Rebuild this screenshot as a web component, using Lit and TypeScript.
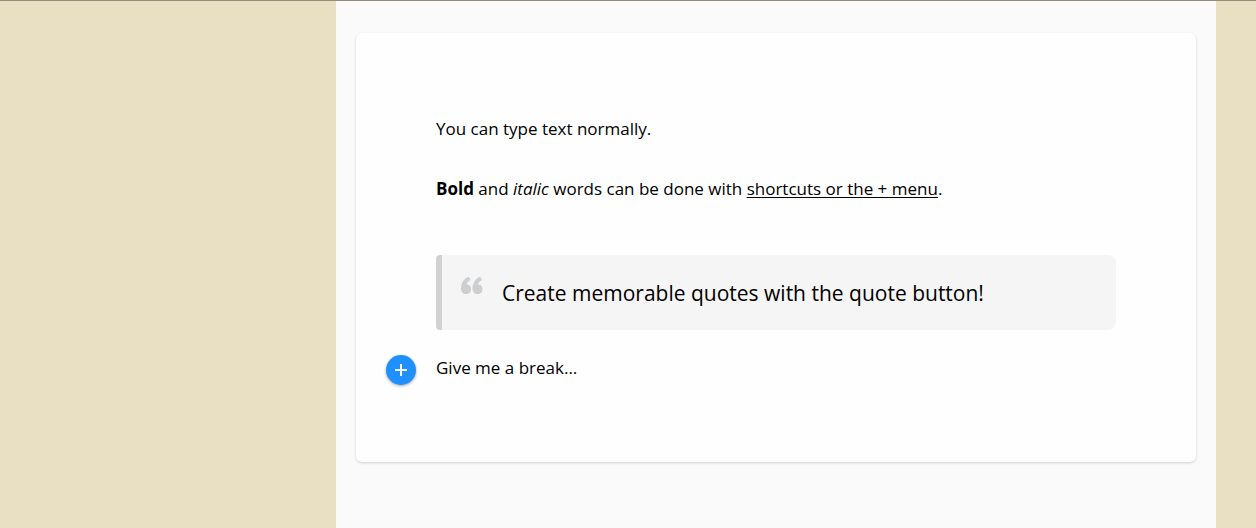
import { LitElement, html, css } from "lit";
import { customElement } from "lit/decorators.js";

@customElement("app-root")
export class AppRoot extends LitElement {
  static styles = css`
    :host {
      display: block;
      font-family: "Segoe UI", "Open Sans", "Noto Sans", sans-serif;
      color: #000;
    }
    .page {
      box-sizing: border-box;
      min-height: 100vh;
      padding: 0 40px 0 336px;
      border-top: 1px solid #948a78;
      background: #e9e0c3;
      display: flex;
    }
    main {
      flex: 1;
      background: #fafafa;
      padding: 32px 20px 64px;
    }
    .card {
      background: #fefefe;
      border-radius: 6px;
      box-shadow: 0 1px 3px rgba(0, 0, 0, 0.16);
      padding: 80px 80px 77px;
    }
    p {
      margin: 0 0 28px;
      font-size: 17px;
      line-height: 32px;
      font-weight: 400;
    }
    b {
      font-weight: 700;
    }
    a {
      color: inherit;
      text-decoration: underline;
      text-decoration-thickness: 1px;
      text-underline-offset: 2px;
    }
    blockquote {
      display: flex;
      align-items: flex-start;
      gap: 18px;
      margin: 50px 0 22px;
      padding: 22px 18px 20px;
      border-left: 6px solid #d2d2d2;
      border-radius: 4px 8px 8px 4px;
      background: #f5f5f5;
      font-size: 21px;
      line-height: 33px;
      font-weight: 400;
    }
    .mark {
      flex: none;
      width: 24px;
      height: 20px;
      fill: #cccecf;
    }
    .row {
      display: flex;
      align-items: flex-start;
      gap: 20px;
      margin-left: -50px;
    }
    .row p {
      margin: 0;
    }
    button {
      display: grid;
      place-items: center;
      width: 30px;
      height: 30px;
      margin: 3px 0 0;
      padding: 0;
      border: 0;
      border-radius: 50%;
      background: #1e90ff;
      box-shadow: 0 1px 3px rgba(0, 0, 0, 0.35);
      cursor: pointer;
    }
    button svg {
      width: 12px;
      height: 12px;
      fill: #f4f9ff;
    }
  `;

  render() {
    return html`
      <div class="page">
        <main>
          <article class="card">
            <p>You can type text normally.</p>
            <p>
              <b>Bold</b> and <i>italic</i> words can be done with
              <a href="#menu">shortcuts or the + menu</a>.
            </p>
            <blockquote>
              <svg class="mark" viewBox="0 1 24 20" aria-hidden="true">
                <path
                  d="M8 1 C3.500 3 1 7.500 1 12.500 C1 16 3 18 6 18 C9 18 11 16 11 13.200 C11 10.400 9.300 8.700 6.500 8.600 C6.900 7 7.900 5.700 9.700 4.600 C10.300 4.200 10.400 3.700 10 3 L9.200 1.500 C8.900 1 8.500 0.800 8 1Z"
                />
                <path
                  d="M19.500 1 C15 3 12.500 7.500 12.500 12.500 C12.500 16 14.500 18 17.500 18 C20.500 18 22.500 16 22.500 13.200 C22.500 10.400 20.800 8.700 18 8.600 C18.400 7 19.400 5.700 21.200 4.600 C21.800 4.200 21.900 3.700 21.500 3 L20.700 1.500 C20.400 1 20 0.800 19.500 1Z"
                />
              </svg>
              <span>Create memorable quotes with the quote button!</span>
            </blockquote>
            <div class="row">
              <button type="button" aria-label="Insert">
                <svg viewBox="0 0 12 12" aria-hidden="true">
                  <path d="M5 0h2v5h5v2H7v5H5V7H0V5h5z" />
                </svg>
              </button>
              <p>Give me a break...</p>
            </div>
          </article>
        </main>
      </div>
    `;
  }
}
